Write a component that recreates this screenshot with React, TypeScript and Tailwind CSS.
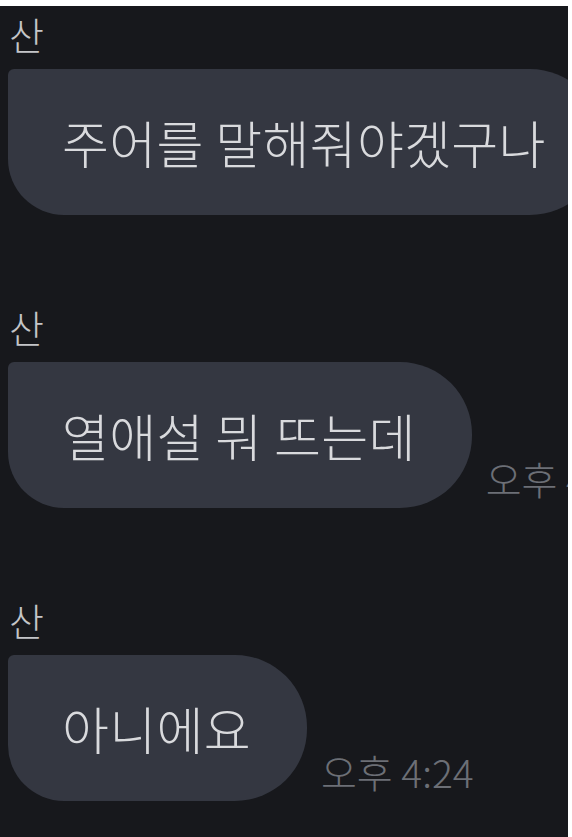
import React from 'react'

interface Message {
  name: string
  text: string
  time?: string
}

const messages: Message[] = [
  { name: '산', text: '주어를 말해줘야겠구나' },
  { name: '산', text: '열애설 뭐 뜨는데', time: '오후 4:24' },
  { name: '산', text: '아니에요', time: '오후 4:24' },
]

export default function App() {
  return (
    <div
      className="flex min-h-screen flex-col bg-white"
      style={{ fontFamily: '"Noto Sans CJK KR", "Noto Sans", sans-serif' }}
    >
      {/* top white strip */}
      <div className="h-[6px] shrink-0 bg-white" />
      <div className="flex flex-1">
        <div className="flex min-w-0 flex-1 flex-col gap-[90px] overflow-hidden bg-[#17181c] pt-[6px] pl-[8px]">
          {messages.map((m, i) => (
            <div key={i} className="flex flex-col">
              <div className="pl-[1px] text-[38px] font-light leading-[44px] text-[#c4c5c8]">{m.name}</div>
              <div className="mt-[13px] flex items-end gap-[14px]">
                <div className="flex h-[146px] shrink-0 items-center rounded-tl-[6px] rounded-bl-[56px] rounded-r-[72px] bg-[#343741] pl-[54px] pr-[56px]">
                  <span className="whitespace-nowrap text-[51px] font-light leading-none tracking-[0.3px] text-[#d9dadd]">
                    {m.text}
                  </span>
                </div>
                {m.time && (
                  <span className="mb-[8px] shrink-0 whitespace-nowrap text-[39px] font-light leading-[44px] text-[#6c6f76]">
                    {m.time}
                  </span>
                )}
              </div>
            </div>
          ))}
        </div>
        {/* right white strip */}
        <div className="w-[4px] shrink-0 bg-white" />
      </div>
    </div>
  )
}
